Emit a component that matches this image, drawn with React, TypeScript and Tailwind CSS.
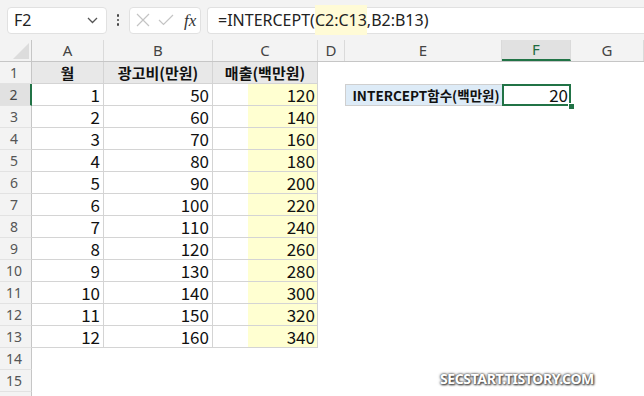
import React from 'react';

const cols = ['A', 'B', 'C', 'D', 'E', 'F', 'G'];
const colWidths = ['w-[72px]', 'w-[109px]', 'w-[105px]', 'w-[27px]', 'w-[157px]', 'w-[69px]', 'w-[73px]'];

const data = [
  [1, 50, 120],
  [2, 60, 140],
  [3, 70, 160],
  [4, 80, 180],
  [5, 90, 200],
  [6, 100, 220],
  [7, 110, 240],
  [8, 120, 260],
  [9, 130, 280],
  [10, 140, 300],
  [11, 150, 320],
  [12, 160, 340],
];

const cellFont = { fontFamily: '"Noto Sans CJK KR", "Noto Sans", sans-serif' };

function FormulaBar() {
  return (
    <div className="h-[40px] bg-[#f3f3f3] flex items-center pl-[7px]">
      {/* Name box */}
      <div className="w-[100px] h-[27px] bg-white border border-[#e1e1e1] rounded-[4px] flex items-center justify-between pl-[6px] pr-[8px]">
        <span className="text-[16px] text-[#222]" style={{ fontFamily: '"Noto Sans", sans-serif' }}>F2</span>
        <svg width="11" height="7" viewBox="0 0 11 7" fill="none" stroke="#555" strokeWidth="1.3">
          <path d="M1 1l4.5 4.5L10 1" />
        </svg>
      </div>
      {/* Dots */}
      <div className="w-[22px] flex flex-col items-center gap-[2px]">
        <span className="w-[2.5px] h-[2.5px] bg-[#444] rounded-full" />
        <span className="w-[2.5px] h-[2.5px] bg-[#444] rounded-full" />
        <span className="w-[2.5px] h-[2.5px] bg-[#444] rounded-full" />
      </div>
      {/* Function buttons */}
      <div className="w-[72px] h-[27px] bg-white border border-[#e1e1e1] rounded-[4px] flex items-center pl-[6px] gap-[8px]">
        <svg width="14" height="14" viewBox="0 0 14 14" stroke="#c4c4c4" strokeWidth="1.2" fill="none">
          <path d="M1 1l12 12M13 1L1 13" />
        </svg>
        <svg width="16" height="12" viewBox="0 0 16 12" stroke="#c4c4c4" strokeWidth="1.2" fill="none">
          <path d="M1 6l4.5 4.5L15 1" />
        </svg>
        <span className="text-[17px] italic text-[#333] ml-[2px] leading-none" style={{ fontFamily: '"Liberation Serif", serif' }}>
          fx
        </span>
      </div>
      <div className="ml-[6px] flex-1 h-[27px] bg-white border border-[#e1e1e1] border-r-0 rounded-l-[4px] flex items-center pl-[10px]">
        <span className="text-[16px] text-[#222] whitespace-nowrap" style={{ fontFamily: '"Noto Sans", sans-serif' }}>
          =INTERCEPT(<span className="bg-[#fffbd6] py-[4px]">C2:C13</span>,B2:B13)
        </span>
      </div>
    </div>
  );
}

function ColumnHeaders() {
  return (
    <div className="flex h-[22px] bg-[#f3f3f3] border-b border-[#c6c6c6]">
      <div className="w-[32px] border-r border-[#c6c6c6] relative">
        <div
          className="absolute right-[2px] bottom-[2px] w-[16px] h-[16px] bg-[#dcdcdc]"
          style={{ clipPath: 'polygon(100% 0, 100% 100%, 0 100%)' }}
        />
      </div>
      {cols.map((c, i) => (
        <div
          key={c}
          className={`${colWidths[i]} flex items-center justify-center text-[15px] border-r border-[#dadada] ${
            c === 'F' ? 'bg-[#e1e1e1] text-[#1d6b40] border-b-2 border-b-[#217346]' : 'text-[#444]'
          }`}
          style={{ fontFamily: '"Noto Sans", sans-serif' }}
        >
          {c}
        </div>
      ))}
    </div>
  );
}

function RowHeader({ n }: { n: number }) {
  const sel = n === 2;
  return (
    <div
      className={`w-[32px] shrink-0 flex items-center justify-center pr-[3px] text-[14px] leading-[18px] border-b border-[#e2e2e2] ${
        sel ? 'bg-[#e1e1e1] text-[#444] border-r-2 border-r-[#217346]' : 'bg-[#f3f3f3] text-[#555] border-r border-r-[#c6c6c6]'
      }`}
      style={{ fontFamily: '"Noto Sans", sans-serif' }}
    >
      {n}
    </div>
  );
}

function Row({ n }: { n: number }) {
  const d = n >= 2 && n <= 13 ? data[n - 2] : null;
  const inTable = n <= 13;
  const tb = inTable ? 'border-r border-b border-[#d4d4d4]' : '';
  const head = 'bg-[#e8e8e8] font-bold text-[15px] leading-[20px] whitespace-nowrap flex items-center justify-center';
  const num = 'text-[17px] leading-[20px] flex items-center justify-end pr-[3px]';
  return (
    <div className="flex h-[22px]">
      <RowHeader n={n} />
      {n === 1 ? (
        <>
          <div className={`w-[72px] ${head} ${tb}`} style={cellFont}>월</div>
          <div className={`w-[109px] ${head} ${tb}`} style={cellFont}>광고비(만원)</div>
          <div className={`w-[105px] ${head} ${tb}`} style={cellFont}>매출(백만원)</div>
        </>
      ) : d ? (
        <>
          <div className={`w-[72px] ${num} ${tb}`} style={cellFont}>{d[0]}</div>
          <div className={`w-[109px] ${num} ${tb}`} style={cellFont}>{d[1]}</div>
          <div className={`w-[105px] flex justify-end ${tb}`}>
            <div className="w-[69px] bg-[#ffffd1] text-[17px] leading-[20px] flex items-center justify-end pr-[2px]" style={cellFont}>{d[2]}</div>
          </div>
        </>
      ) : (
        <div className="w-[286px]" />
      )}
      <div className="w-[27px]" />
      {n === 2 ? (
        <>
          <div
            className="w-[157px] bg-[#ddebf7] border border-[#cfcfcf] border-r-0 font-bold text-[13.5px] leading-[18px] whitespace-nowrap flex items-center justify-center pl-[4px] text-[#111]"
            style={cellFont}
          >
            INTERCEPT함수(백만원)
          </div>
          <div className="w-[69px] relative border-2 border-[#217346] text-[17px] leading-[18px] flex items-center justify-end pr-[1px]" style={cellFont}>
            20
          </div>
        </>
      ) : (
        <div className="w-[226px]" />
      )}
    </div>
  );
}

export default function App() {
  return (
    <div className="w-[644px] h-[396px] overflow-hidden bg-white relative text-[#111]">
      <FormulaBar />
      <ColumnHeaders />
      {Array.from({ length: 15 }, (_, i) => (
        <Row key={i} n={i + 1} />
      ))}
      {/* partial row 16 */}
      <div className="h-[4px] w-[32px] bg-[#f3f3f3] border-r border-[#c6c6c6]" />
      {/* fill handle */}
      <span className="absolute left-[568px] top-[103px] w-[7px] h-[7px] bg-[#217346] border border-white" />
      <div
        className="absolute left-[440px] top-[372px] text-white font-bold text-[14px] leading-none tracking-[-0.4px] whitespace-nowrap"
        style={{ fontFamily: '"Noto Sans", sans-serif', textShadow: '0 0 3px #555, 0 0 2px #555, 1px 1px 2px #333' }}
      >
        SECSTART.TISTORY.COM
      </div>
    </div>
  );
}
